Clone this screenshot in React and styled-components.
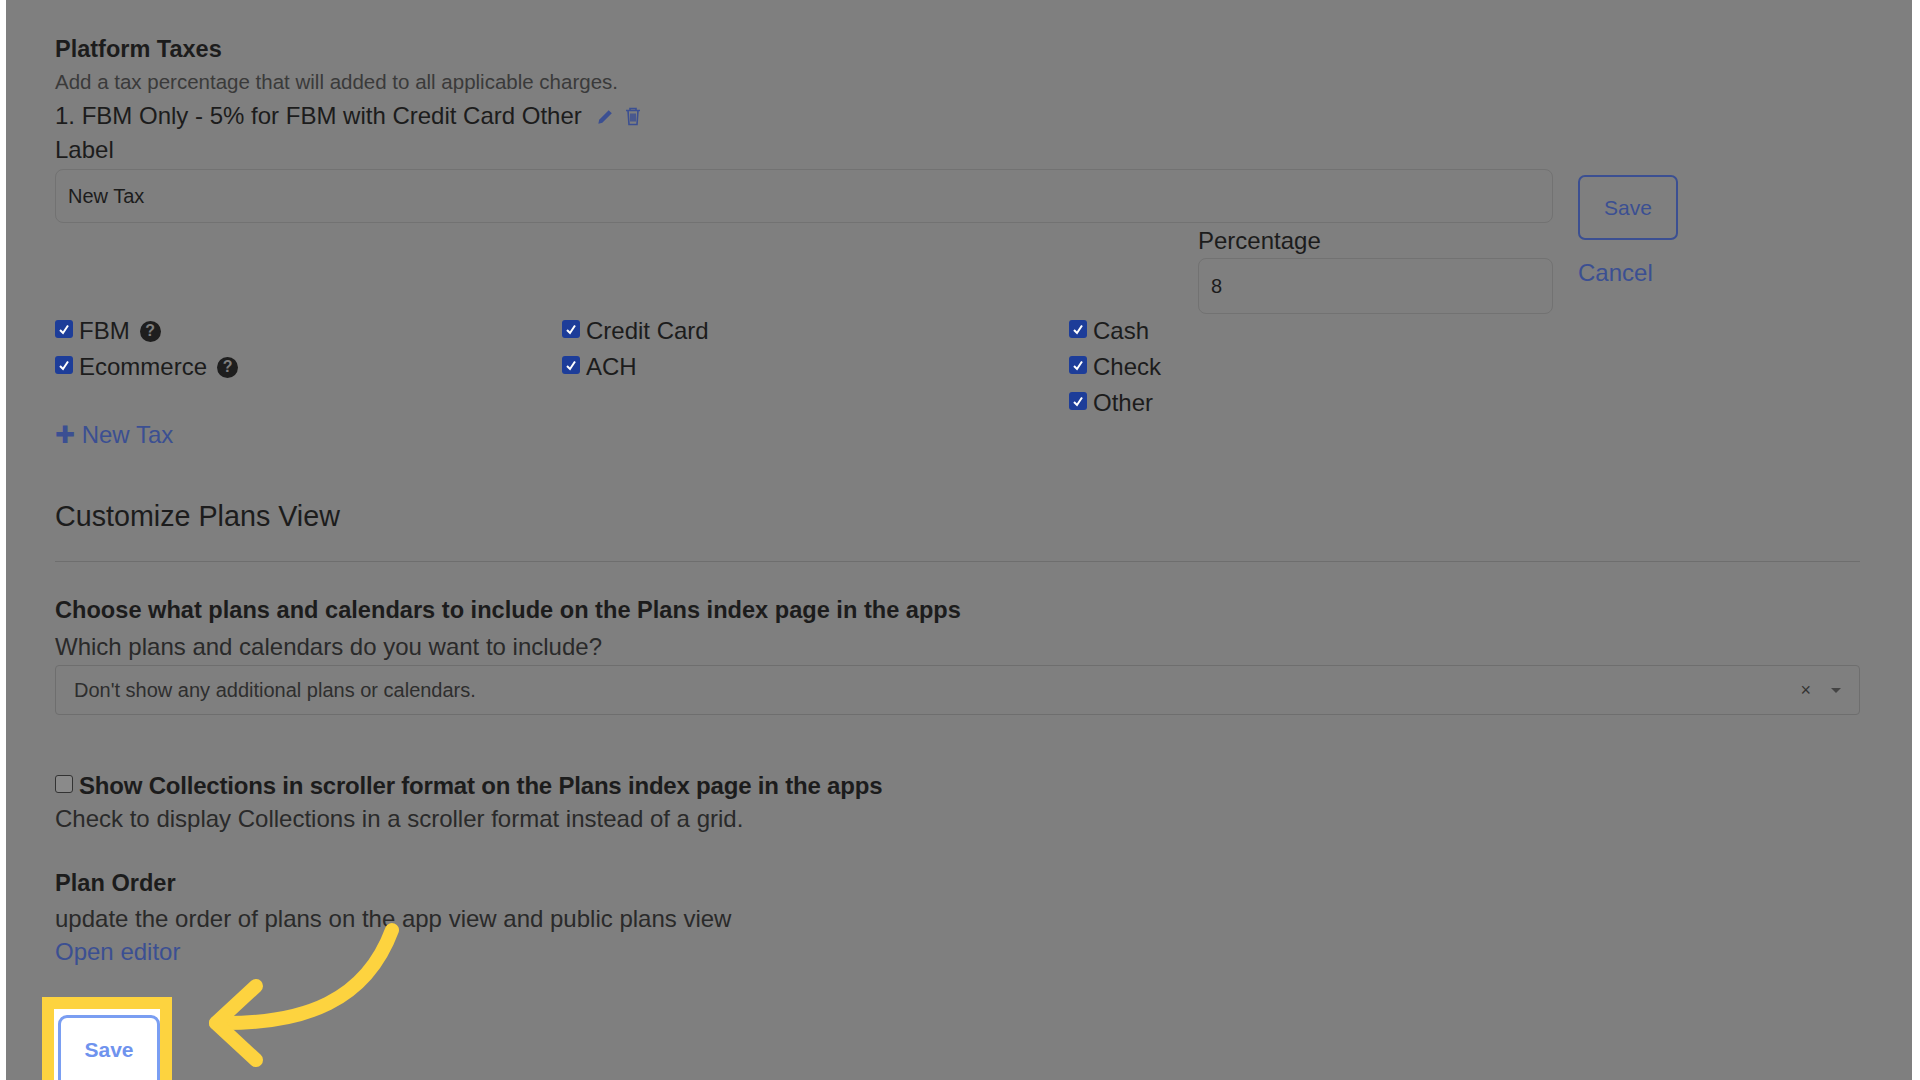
import React from "react";
import styled, { createGlobalStyle } from "styled-components";

const Global = createGlobalStyle`
  html, body { margin: 0; padding: 0; background: #fff; overflow: hidden; }
  body { font-family: "Liberation Sans", Arial, sans-serif; color: #1e1e1e; }
`;

const Frame = styled.div`
  width: 1920px; height: 1080px; display: flex; background: #fff;
`;
const Page = styled.div`
  margin-left: 6px; width: 1906px; height: 1080px; background: #7f7f7f;
  position: relative; overflow: hidden; box-sizing: border-box;
  padding: 33px 52px 0 49px;
`;
const H3 = styled.div`font-size: 23.5px; font-weight: bold; color: #1c1c1c; line-height: 32px;`;
const Desc = styled.div`font-size: 20.5px; color: #3a3a3a; line-height: 34px;`;
const TaxLine = styled.div`font-size: 24px; color: #1c1c1c; display: flex; align-items: center; gap: 14px; line-height: 34px;`;
const Icons = styled.span`display: inline-flex; gap: 10px; align-items: center; color: #3b4f92;`;
const Label = styled.div`font-size: 24px; color: #1c1c1c; line-height: ${p => p.lh || 34}px; margin-top: ${p => p.mt || 0}px;`;
const FormRow = styled.div`display: flex; gap: 25px; align-items: flex-start;`;
const FormMain = styled.div`width: 1498px; display: flex; flex-direction: column; padding-top: 2px;`;
const Input = styled.div`
  height: ${p => p.h || 54}px; border: 1.5px solid #727272; border-radius: 8px; box-sizing: border-box;
  display: flex; align-items: center; padding-left: 12px; font-size: 20px; color: #1c1c1c;
  width: ${p => p.w || "100%"};
`;
const PctWrap = styled.div`margin-left: 1143px; display: flex; flex-direction: column; gap: 2px;`;
const Side = styled.div`display: flex; flex-direction: column; padding-top: 8px;`;
const OutlineBtn = styled.div`
  width: 100px; height: 65px; border: 2.5px solid #3b4f92; border-radius: 7px; box-sizing: border-box;
  display: flex; align-items: center; justify-content: center; font-size: 21px; color: #3b4f92;
`;
const Link = styled.div`font-size: 24px; color: #3b4f92; line-height: 30px; margin-top: ${p => p.mt || 0}px;`;
const Grid = styled.div`display: grid; grid-template-columns: 507px 507px 400px; margin-top: 2px;`;
const Col = styled.div`display: flex; flex-direction: column; gap: 6px;`;
const Check = styled.div`display: flex; align-items: center; gap: 6px; font-size: 24px; color: #1c1c1c; line-height: 30px; font-weight: ${p => p.bold ? "bold" : "normal"}; letter-spacing: ${p => p.bold ? "-0.2px" : "0"};`;
const Box = styled.span`
  width: 18px; height: 18px; border-radius: 3px; box-sizing: border-box; display: inline-flex; flex: none;
  align-items: center; justify-content: center; margin-top: -4px;
  background: ${p => p.on ? "#1d3d99" : "#8a8a8a"}; border: ${p => p.on ? "none" : "1.5px solid #333"};
`;
const Q = styled.span`
  width: 21px; height: 21px; border-radius: 50%; background: #1e1e1e; color: #7f7f7f;
  font-size: 16px; font-weight: bold; display: inline-flex; align-items: center; justify-content: center; margin-left: 4px;
`;
const H2 = styled.div`font-size: 28.7px; color: #1c1c1c; margin-top: 48px; line-height: 36px;`;
const Hr = styled.div`height: 1px; background: #6e6e6e; margin-top: 27px; width: 1805px;`;
const Bold = styled.div`font-size: 23.6px; font-weight: bold; color: #1c1c1c; line-height: 30px; margin-top: ${p => p.mt || 0}px;`;
const Text = styled.div`font-size: 24px; color: #2a2a2a; line-height: 30px; margin-top: ${p => p.mt || 0}px;`;
const Select = styled.div`
  width: 1805px; height: 50px; border: 1.5px solid #6e6e6e; border-radius: 4px; box-sizing: border-box;
  display: flex; align-items: center; padding: 0 18px; font-size: 20px; color: #2e2e2e; margin-top: 3px;
`;
const SelTxt = styled.span`flex: 1;`;
const SelIcons = styled.span`display: flex; gap: 20px; align-items: center; color: #333; font-size: 18px;`;
const Caret = styled.span`width: 0; height: 0; border-left: 5px solid transparent; border-right: 5px solid transparent; border-top: 5px solid #444;`;
const Spacer = styled.div`height: ${p => p.h}px;`;
const Highlight = styled.div`
  position: absolute; left: 36px; top: 997px; width: 130px; height: 100px; box-sizing: border-box;
  border: 12px solid #fdd33f; background: #fff; padding: 6px 0 0 4px;
`;
const WhiteBtn = styled.div`
  width: 102px; height: 90px; border: 3px solid #7a9ef2; border-radius: 9px; box-sizing: border-box;
  display: flex; justify-content: center; padding-top: 20px; font-size: 21px; font-weight: bold; color: #6f93ee;
`;
const Arrow = styled.svg`position: absolute; left: 174px; top: 900px;`;

const Tick = () => (
  <svg width="12" height="11" viewBox="0 0 12 11"><path d="M2 6 L5 9 L10 1.5" stroke="#fff" strokeWidth="2" fill="none" /></svg>
);
const CB = ({ label, q, on = true, bold }) => (
  <Check bold={bold}><Box on={on}>{on && <Tick />}</Box>{label}{q && <Q>?</Q>}</Check>
);

export default function App() {
  return (
    <Frame>
      <Global />
      <Page>
        <H3>Platform Taxes</H3>
        <Desc>Add a tax percentage that will added to all applicable charges.</Desc>
        <TaxLine>1. FBM Only - 5% for FBM with Credit Card Other
          <Icons>
            <svg width="19" height="19" viewBox="0 0 24 24"><path d="M3 21l1-5L16 4l4 4L8 20z" fill="#3b4f92" /></svg>
            <svg width="16" height="19" viewBox="0 0 16 18" fill="none" stroke="#3b4f92" strokeWidth="1.6"><path d="M1 3h14M5 3V1h6v2M3 3l1 14h8l1-14M6 6v8M8 6v8M10 6v8" /></svg>
          </Icons>
        </TaxLine>
        <Label>Label</Label>
        <FormRow>
          <FormMain>
            <Input>New Tax</Input>
            <PctWrap>
              <Label lh={30} mt={3}>Percentage</Label>
              <Input w="355px" h={56}>8</Input>
            </PctWrap>
          </FormMain>
          <Side>
            <OutlineBtn>Save</OutlineBtn>
            <Link mt={18}>Cancel</Link>
          </Side>
        </FormRow>
        <Grid>
          <Col><CB label="FBM" q /><CB label="Ecommerce" q /></Col>
          <Col><CB label="Credit Card" /><CB label="ACH" /></Col>
          <Col><CB label="Cash" /><CB label="Check" /><CB label="Other" /></Col>
        </Grid>
        <Link mt={2}>✚ New Tax</Link>
        <H2>Customize Plans View</H2>
        <Hr />
        <Bold mt={33}>Choose what plans and calendars to include on the Plans index page in the apps</Bold>
        <Text mt={7}>Which plans and calendars do you want to include?</Text>
        <Select>
          <SelTxt>Don't show any additional plans or calendars.</SelTxt>
          <SelIcons>×<Caret /></SelIcons>
        </Select>
        <Spacer h={56} />
        <CB label="Show Collections in scroller format on the Plans index page in the apps" on={false} bold />
        <Text mt={3}>Check to display Collections in a scroller format instead of a grid.</Text>
        <Bold mt={34}>Plan Order</Bold>
        <Text mt={6}>update the order of plans on the app view and public plans view</Text>
        <Link mt={3}>Open editor</Link>
        <Highlight><WhiteBtn>Save</WhiteBtn></Highlight>
        <Arrow width="240" height="180" viewBox="0 0 240 180" fill="none" stroke="#fdd33f" strokeWidth="14" strokeLinecap="round" strokeLinejoin="round">
          <path d="M212 30 C186 100 126 125 36 123" />
          <path d="M76 86 L36 123 L76 160" />
        </Arrow>
      </Page>
    </Frame>
  );
}
